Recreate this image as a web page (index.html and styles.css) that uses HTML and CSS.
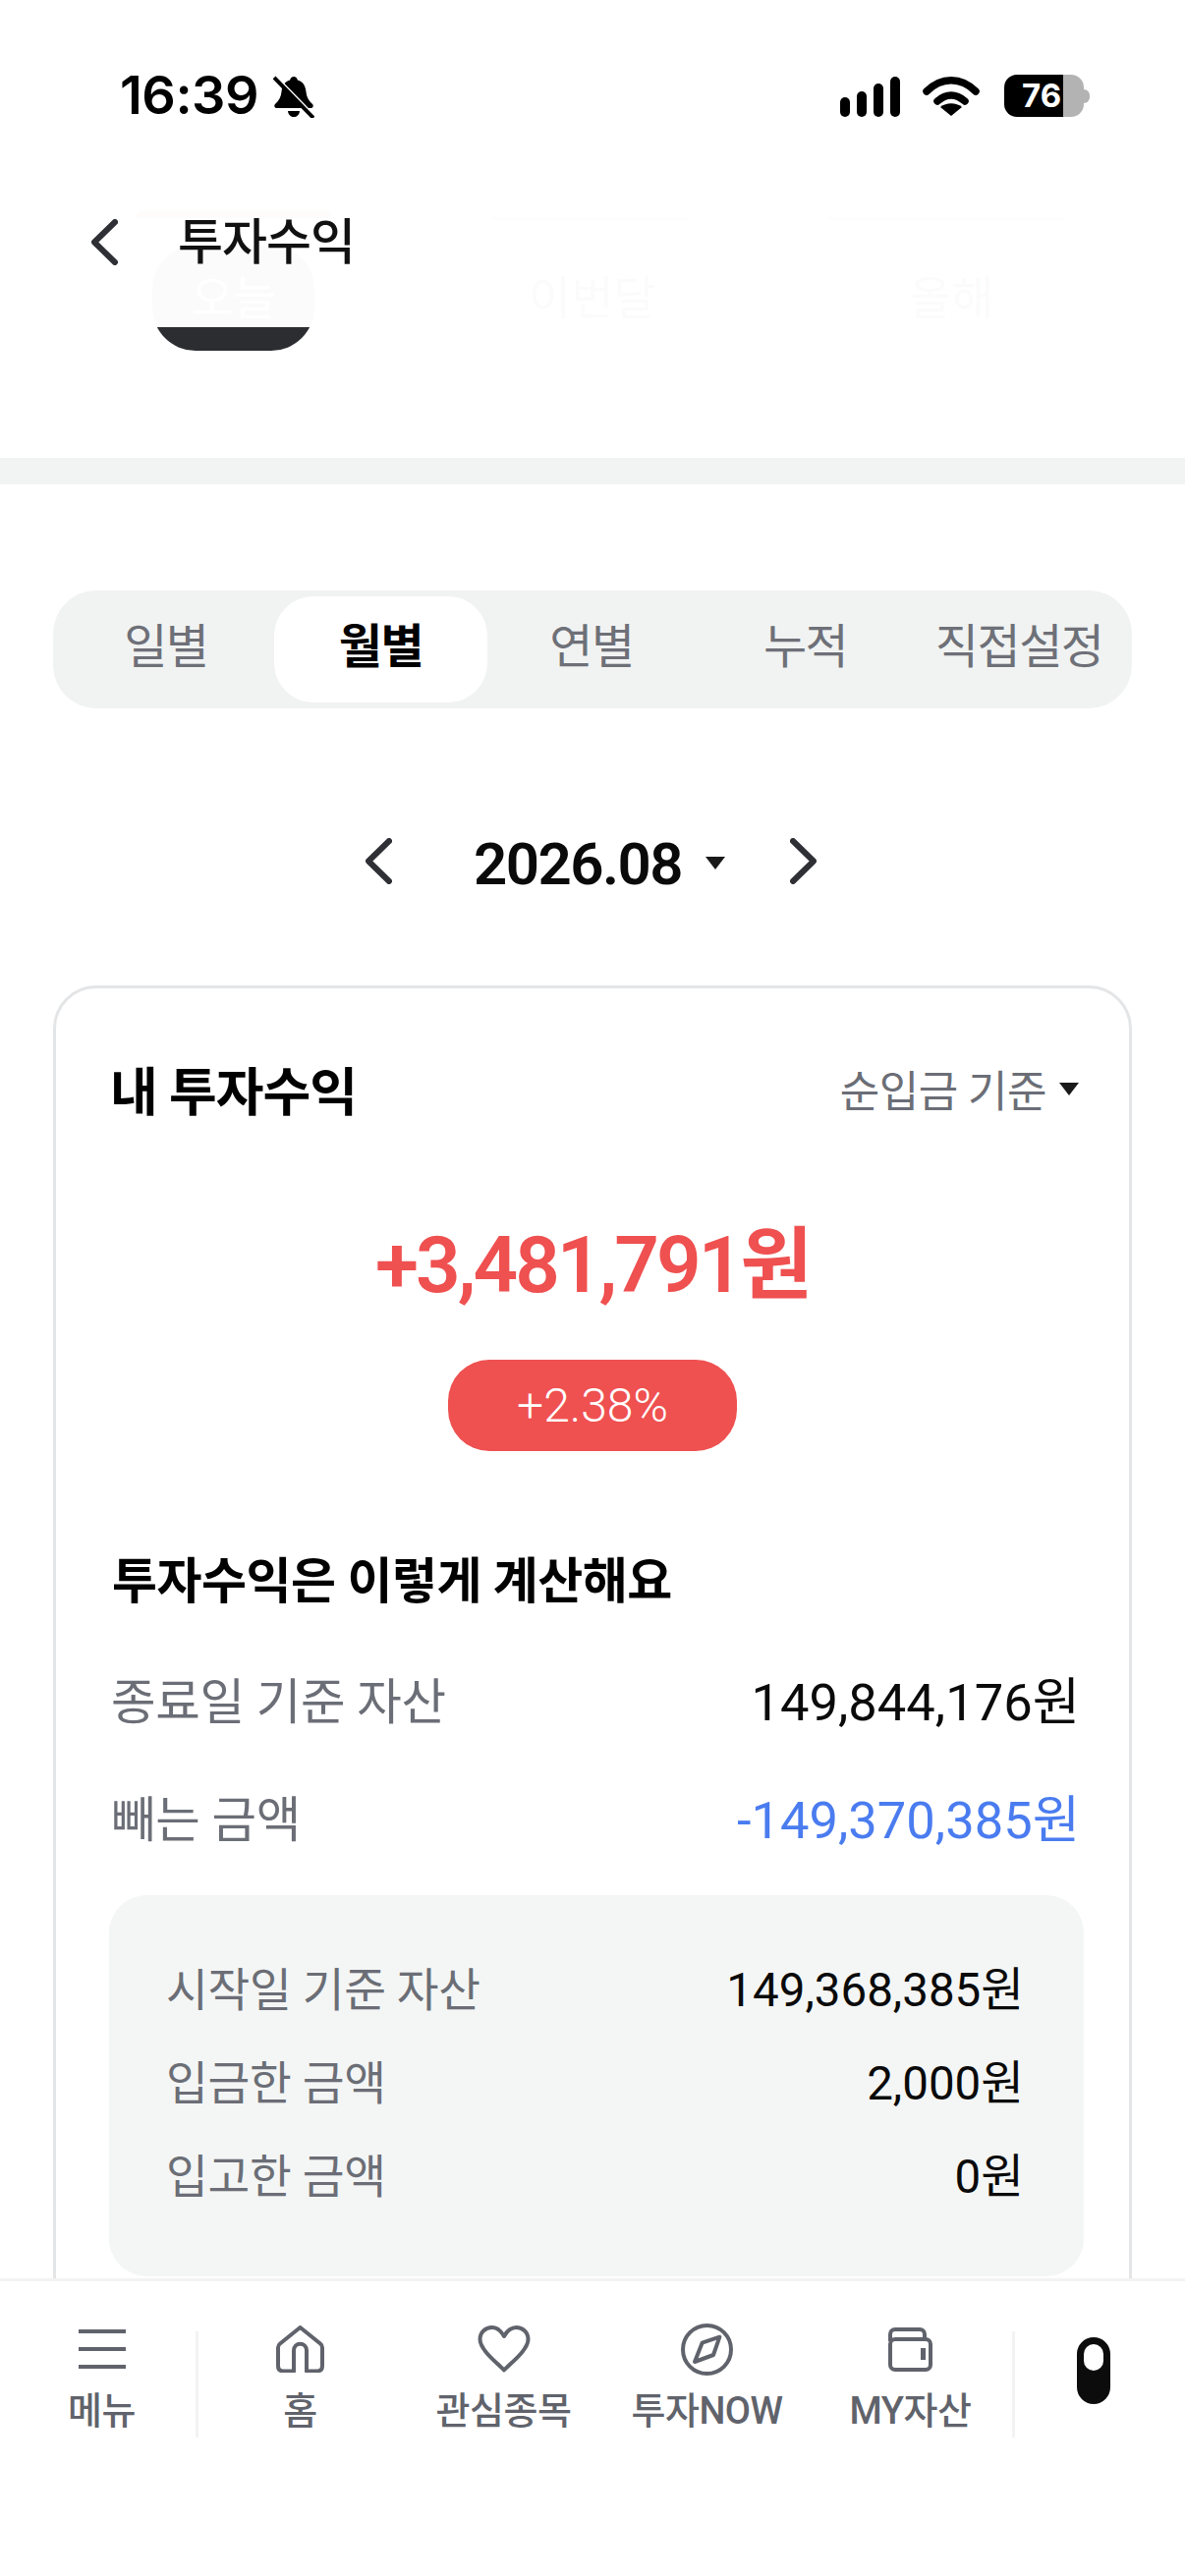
FILE: index.html
```html
<!DOCTYPE html>
<html lang="ko">
<head>
  <meta charset="UTF-8">
  <meta name="viewport" content="width=device-width, initial-scale=1.0">
  <title>투자수익</title>
  <link rel="stylesheet" href="styles.css">
</head>
<body>
  <div class="page">
    <div class="top">
      <!-- page content scrolled under the header -->
      <div class="under-caps">
        <div class="cap cap-warm"></div>
        <div class="cap cap-line"></div>
        <div class="cap cap-line cap-wide"></div>
      </div>
      <div class="under-tabs">
        <div class="under-tab under-tab-on"><span>오늘</span></div>
        <div class="under-tab"><span>이번달</span></div>
        <div class="under-tab"><span>올해</span></div>
      </div>

      <header class="topbar">
        <div class="status">
          <div class="status-left">
            <span class="clock">16:39</span>
            <svg class="bell" viewBox="0 0 42 44">
              <path d="M21 2c2 0 3.500 1.500 3.800 3.500 6 1.500 8.200 6.500 8.700 12 .4 5 2.500 9 6.500 12.500 1.500 1.500.5 4-1.500 4H3.500c-2 0-3-2.500-1.500-4 4-3.500 6-7.500 6.500-12.500.5-5.500 2.700-10.500 8.700-12C17.500 3.500 19 2 21 2z"/>
              <path d="M15 37h12c-.5 4-3 6-6 6s-5.500-2-6-6z"/>
              <path class="bell-gap" d="M1 1l40 41"/>
              <path class="bell-slash" d="M1 3l40 41"/>
            </svg>
          </div>
          <div class="status-right">
            <div class="signal">
              <i class="bar-1"></i><i class="bar-2"></i><i class="bar-3"></i><i class="bar-4"></i>
            </div>
            <svg class="wifi" viewBox="0 0 58 41">
              <path d="M4 16C19 1 39 1 54 16M15 26c9-8 19-8 28 0" fill="none" stroke="#000" stroke-width="7.500" stroke-linecap="round"/>
              <path d="M29 41L18 32c6-5 16-5 22 0z"/>
            </svg>
            <div class="battery">
              <div class="battery-body"><span>76</span></div>
              <div class="battery-nub"></div>
            </div>
          </div>
        </div>
        <div class="navbar">
          <svg class="chev" viewBox="0 0 27 47"><path d="M24 3L3 23.500 24 44"/></svg>
          <h1>투자수익</h1>
        </div>
      </header>
    </div>

    <div class="band"></div>

    <div class="content">
      <div class="segment">
        <div class="seg">일별</div>
        <div class="seg seg-on">월별</div>
        <div class="seg">연별</div>
        <div class="seg">누적</div>
        <div class="seg">직접설정</div>
      </div>

      <div class="date-row">
        <svg class="chev" viewBox="0 0 27 47"><path d="M24 3L3 23.500 24 44"/></svg>
        <div class="date">2026.08</div>
        <div class="caret date-caret"></div>
        <svg class="chev" viewBox="0 0 27 47"><path d="M3 3l21 20.500L3 44"/></svg>
      </div>

      <div class="card">
        <div class="card-head">
          <h2>내 투자수익</h2>
          <div class="basis">순입금 기준<div class="caret"></div></div>
        </div>
        <div class="hero">
          <div class="amount">+3,481,791원</div>
          <div class="rate">+2.38%</div>
        </div>
        <h3>투자수익은 이렇게 계산해요</h3>
        <div class="row">
          <span class="label">종료일 기준 자산</span>
          <span class="value">149,844,176원</span>
        </div>
        <div class="row row-minus">
          <span class="label">빼는 금액</span>
          <span class="value value-blue">-149,370,385원</span>
        </div>
        <div class="box">
          <div class="box-row">
            <span class="label">시작일 기준 자산</span>
            <span class="value">149,368,385원</span>
          </div>
          <div class="box-row">
            <span class="label">입금한 금액</span>
            <span class="value">2,000원</span>
          </div>
          <div class="box-row">
            <span class="label">입고한 금액</span>
            <span class="value">0원</span>
          </div>
        </div>
      </div>
    </div>

    <nav class="tabbar">
      <div class="tab tab-menu">
        <div class="tab-icon">
          <div class="burger"><i></i><i></i><i></i></div>
        </div>
        <span>메뉴</span>
      </div>
      <div class="tab-line"></div>
      <div class="tab">
        <div class="tab-icon">
          <svg width="49" height="48" viewBox="0 0 49 48"><path d="M24.500 2L45 18.500c1.300 1 2 2.300 2 4V41c0 3.500-2 5.500-5.500 5.500H31V25.500c0-9-13-9-13 0v21H7.500C4 46.500 2 44.500 2 41V22.500c0-1.700.7-3 2-4z"/></svg>
        </div>
        <span>홈</span>
      </div>
      <div class="tab">
        <div class="tab-icon">
          <svg width="54" height="48" viewBox="0 0 54 48"><path d="M27 45.500C20 38 2.500 25 2.500 14 2.500 6.500 8.500 2 14.500 2c5.500 0 9.500 3.500 12.500 9 3-5.500 7-9 12.500-9 6 0 12 4.500 12 12C51.500 25 34 38 27 45.500z"/></svg>
        </div>
        <span>관심종목</span>
      </div>
      <div class="tab">
        <div class="tab-icon">
          <svg width="53" height="53" viewBox="0 0 53 53"><circle cx="26.500" cy="26.500" r="24.500"/><path d="M39.400 13.700l-17.800 6L14 39l19-7z"/></svg>
        </div>
        <span>투자NOW</span>
      </div>
      <div class="tab">
        <div class="tab-icon">
          <svg width="45" height="45" viewBox="0 0 45 45"><path d="M2 14V7c0-3 2-5 5-5h25c3 0 5 2 5 5v5"/><rect x="2" y="12" width="41" height="31" rx="5"/><rect class="solid" x="33" y="21" width="5" height="12"/></svg>
        </div>
        <span>MY자산</span>
      </div>
      <div class="tab-line"></div>
      <div class="tab-toggle">
        <div class="toggle"><div class="toggle-knob"></div></div>
      </div>
    </nav>
  </div>
</body>
</html>
```

FILE: styles.css
```css
* {
  box-sizing: border-box;
}

body {
  margin: 0;
  background: #fff;
  font-family: Roboto, "Noto Sans CJK KR", sans-serif;
}

h1, h2, h3 {
  margin: 0;
}

.page {
  position: relative;
  width: 1206px;
  height: 2622px;
  overflow: hidden;
  background: #fff;
}

/* top area */
.top {
  position: relative;
  height: 466px;
  padding-top: 214px;
}

.under-caps {
  display: flex;
  height: 36px;
  padding-left: 138px;
  gap: 162px;
}

.cap {
  width: 200px;
  height: 8px;
}

.cap-warm {
  background: #9b6905;
  border-radius: 30px 30px 0 0;
}

.cap-line {
  height: 3px;
  margin-top: 7px;
  background: #999;
}

.cap-wide {
  width: 240px;
  margin-left: -20px;
}

.under-tabs {
  display: flex;
  padding: 0 55px;
}

.under-tab {
  flex: 1;
  display: flex;
  justify-content: center;
  color: #555;
  font-size: 47px;
  line-height: 107px;
}

.under-tab span {
  width: 165px;
  text-align: center;
  border-radius: 44px;
}

.under-tab-on span {
  background: #2c2d31;
  color: #fff;
}

.topbar {
  position: absolute;
  left: 0;
  top: 0;
  width: 100%;
  height: 333px;
  background: rgba(255, 255, 255, 0.98);
}

.status {
  display: flex;
  justify-content: space-between;
  align-items: flex-start;
  height: 196px;
  padding: 70px 97px 0 122px;
}

.status-left {
  display: flex;
  align-items: center;
  gap: 15px;
}

.clock {
  color: #000;
  font-family: Inter, sans-serif;
  font-size: 54px;
  font-weight: 600;
  line-height: 54px;
  letter-spacing: -0.500px;
}

.bell {
  width: 42px;
  height: 44px;
  margin-top: 1px;
}

.bell-gap {
  fill: none;
  stroke: #fff;
  stroke-width: 4;
}

.bell-slash {
  fill: none;
  stroke: #000;
  stroke-width: 4;
}

.status-right {
  display: flex;
  align-items: flex-start;
  padding-top: 6px;
}

.signal {
  display: flex;
  align-items: flex-end;
  gap: 7px;
  height: 41px;
  margin-top: 2px;
}

.signal i {
  width: 10px;
  border-radius: 5px;
  background: #000;
}

.bar-1 { height: 20px; }
.bar-2 { height: 26px; }
.bar-3 { height: 34px; }
.bar-4 { height: 41px; }

.wifi {
  width: 58px;
  height: 41px;
  margin: 1px 25px 0 23px;
}

.battery {
  display: flex;
  align-items: center;
}

.battery-body {
  width: 81px;
  height: 43px;
  border-radius: 13px;
  background: linear-gradient(to right, #000 60px, #b3b3b3 60px);
  padding-left: 18px;
  color: #fff;
  font-family: Inter, sans-serif;
  font-size: 33px;
  font-weight: 700;
  line-height: 43px;
}

.battery-nub {
  width: 6px;
  height: 14px;
  border-radius: 0 7px 7px 0;
  background: #b3b3b3;
}

.navbar {
  display: flex;
  align-items: center;
  height: 56px;
  margin-top: 22px;
  padding-left: 93px;
  gap: 61px;
}

.navbar h1 {
  margin-top: 2px;
  color: #111;
  font-size: 50px;
  font-weight: 500;
  letter-spacing: -1px;
  line-height: 56px;
}

.chev {
  width: 27px;
  height: 47px;
  flex: none;
}

.chev path {
  fill: none;
  stroke: #2f3035;
  stroke-width: 6;
  stroke-linecap: round;
  stroke-linejoin: round;
}

.band {
  height: 27px;
  background: #f2f4f3;
}

.content {
  padding: 108px 54px 0;
}

/* 일별 / 월별 switch */
.segment {
  display: flex;
  height: 120px;
  padding: 6px;
  border-radius: 44px;
  background: #f1f3f2;
}

.seg {
  flex: 1;
  text-align: center;
  color: #6e7078;
  font-size: 48px;
  line-height: 104px;
  letter-spacing: -1.500px;
}

.seg-on {
  margin: 0 -3px 0 1px;
  border-radius: 40px;
  background: #fff;
  color: #000;
  font-weight: 700;
}

.date-row {
  display: flex;
  align-items: center;
  justify-content: center;
  height: 100px;
  margin: 105px 3px 77px 0;
}

.date {
  margin: 6px 24px 0 83px;
  color: #0a0a0a;
  font-size: 60px;
  font-weight: 600;
  letter-spacing: -1.500px;
}

.caret {
  width: 0;
  height: 0;
  border-left: 10px solid transparent;
  border-right: 10px solid transparent;
  border-top: 13px solid #1a1a1a;
}

.date-caret {
  margin-right: 66px;
  margin-top: 5px;
}

/* main card, runs on under the tab bar */
.card {
  height: 1500px;
  padding: 72px 46px 0 54px;
  border: 3px solid #e3e5e6;
  border-radius: 44px;
  background: #fff;
}

.card-head {
  display: flex;
  justify-content: space-between;
  align-items: center;
  height: 60px;
  padding: 0 1px;
}

.card-head h2 {
  color: #000;
  font-size: 53px;
  font-weight: 700;
  letter-spacing: -1px;
}

.basis {
  display: flex;
  align-items: center;
  gap: 13px;
  padding-right: 4px;
  color: #6b6e76;
  font-size: 44px;
  letter-spacing: -0.500px;
}

.hero {
  padding-right: 8px;
}

.amount {
  margin-top: 100px;
  color: #ef5050;
  font-size: 80px;
  font-weight: 600;
  line-height: 100px;
  letter-spacing: -3px;
  text-align: center;
}

.rate {
  width: 294px;
  height: 93px;
  margin: 46px auto 0;
  border-radius: 42px;
  background: #ef5050;
  color: #fff;
  font-size: 48px;
  font-weight: 300;
  line-height: 93px;
  text-align: center;
}

.card h3 {
  margin-top: 103px;
  padding-left: 3px;
  color: #000;
  font-size: 50px;
  font-weight: 700;
  line-height: 60px;
  letter-spacing: -0.500px;
}

.row {
  display: flex;
  justify-content: space-between;
  align-items: center;
  height: 72px;
  margin-top: 52px;
  padding: 0 4px 0 2px;
}

.row-minus {
  margin-top: 48px;
}

.label {
  color: #6b6e76;
  font-size: 49.500px;
  letter-spacing: -0.300px;
}

.value {
  color: #0a0a0a;
  font-size: 52.500px;
}

.value-blue {
  color: #4a7cf0;
}

.box {
  display: flex;
  flex-direction: column;
  gap: 35px;
  height: 388px;
  margin-top: 45px;
  padding: 62px 61px 0 58px;
  border-radius: 38px;
  background: #f4f6f5;
}

.box-row {
  display: flex;
  justify-content: space-between;
  align-items: center;
  height: 60px;
}

.box-row .label {
  font-size: 46.500px;
}

.box-row .value {
  font-size: 47.500px;
}

/* bottom tab bar */
.tabbar {
  position: absolute;
  left: 0;
  bottom: 0;
  display: flex;
  align-items: flex-start;
  width: 100%;
  height: 303px;
  padding-top: 51px;
  border-top: 3px solid #f3f3f3;
  background: #fff;
}

.tab {
  flex: none;
  width: 207px;
  display: flex;
  flex-direction: column;
  align-items: center;
  color: #60636b;
  font-size: 38px;
  font-weight: 500;
  letter-spacing: -0.500px;
  line-height: 44px;
}

.tab-menu {
  width: 199px;
  padding-left: 8px;
}

.tab-icon {
  display: flex;
  align-items: center;
  justify-content: center;
  height: 64px;
  margin: -14px 0 9px;
}

.tab-icon svg {
  fill: none;
  stroke: #60636b;
  stroke-width: 4;
  stroke-linejoin: round;
}

.tab-icon .solid {
  fill: #60636b;
  stroke: none;
}

.burger {
  display: flex;
  flex-direction: column;
  gap: 14px;
  width: 48px;
}

.burger i {
  height: 4px;
  background: #60636b;
}

.tab-line {
  flex: none;
  width: 3px;
  height: 108px;
  background: #f3f3f3;
}

.tab-toggle {
  flex: 1;
  padding: 6px 0 0 63px;
}

.toggle {
  width: 34px;
  height: 68px;
  padding: 7px 7px 0;
  border-radius: 17px;
  background: #0c0c0c;
}

.toggle-knob {
  width: 20px;
  height: 27px;
  border-radius: 10px;
  background: #fff;
}
```
